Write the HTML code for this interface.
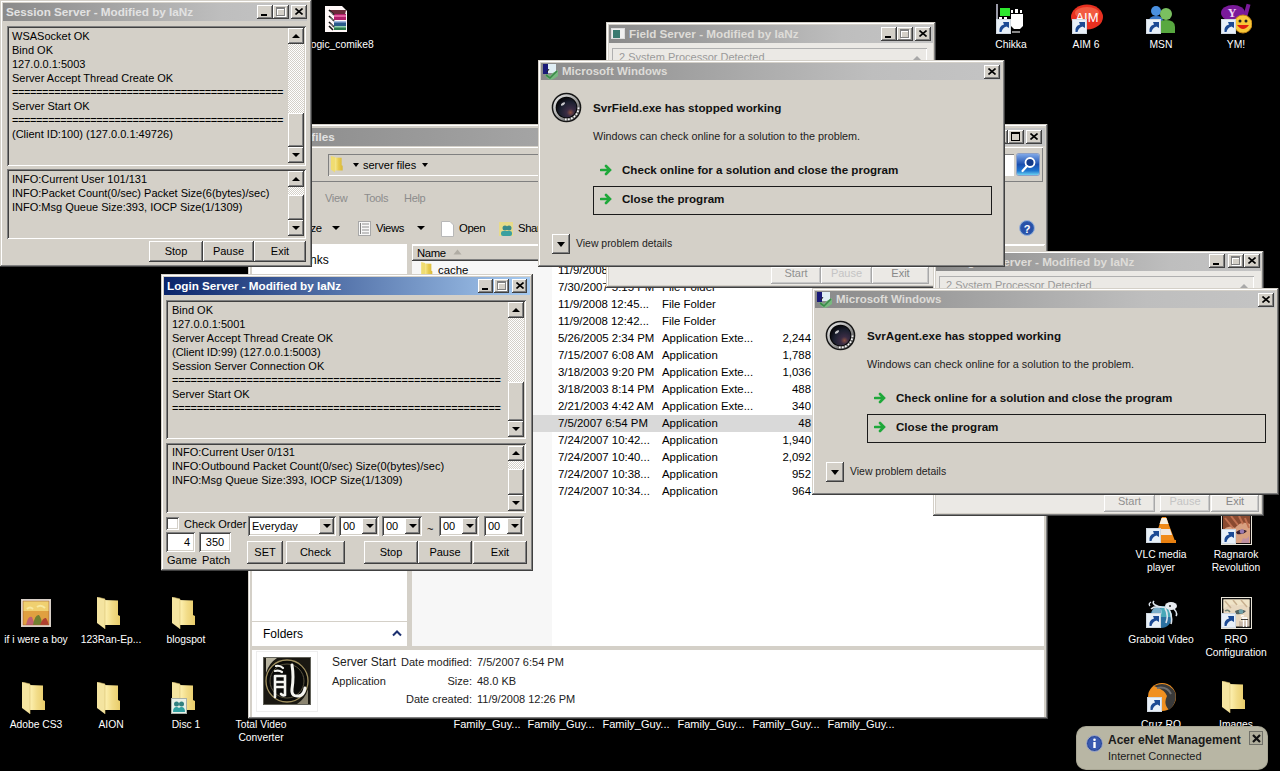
<!DOCTYPE html>
<html><head><meta charset="utf-8">
<style>
*{margin:0;padding:0;box-sizing:border-box}
html,body{width:1280px;height:771px;overflow:hidden;background:#000;font-family:"Liberation Sans",sans-serif;font-size:11px;color:#000}
.a{position:absolute}
.win{position:absolute;background:#d4d0c8;box-shadow:inset -1px -1px #404040,inset 1px 1px #d4d0c8,inset -2px -2px #808080,inset 2px 2px #fff}
.tb{position:absolute;height:18px;color:#d4d0c8;font-weight:bold;font-size:11.7px;line-height:18px;padding-left:3px;white-space:nowrap;overflow:hidden}
.tb.in{background:linear-gradient(90deg,#8a8a8a 0%,#bebebe 72%,#c4c4c4 100%);color:#e2e2e2}
.tb.ac{background:linear-gradient(90deg,#0a246a,#a6caf0);color:#fff}
.tbtn{position:absolute;width:16px;height:14px;background:#d4d0c8;box-shadow:inset -1px -1px #404040,inset 1px 1px #fff,inset -2px -2px #808080}
.btn{position:absolute;background:#d4d0c8;box-shadow:inset -1px -1px #404040,inset 1px 1px #fff,inset -2px -2px #808080;text-align:center;font-size:11px}
.sunk{position:absolute;background:#d4d0c8;box-shadow:inset 1px 1px #808080,inset -1px -1px #fff,inset 2px 2px #404040,inset -2px -2px #d4d0c8}
.sunkw{position:absolute;background:#fff;box-shadow:inset 1px 1px #808080,inset -1px -1px #fff,inset 2px 2px #404040,inset -2px -2px #d4d0c8}
.trk{position:absolute;background:repeating-conic-gradient(#fff 0 25%,#d4d0c8 0 50%) 0 0/2px 2px}
.arr{position:absolute;width:0;height:0;border-left:4px solid transparent;border-right:4px solid transparent}
.up{border-bottom:4px solid #000}
.dn{border-top:4px solid #000}
.log{position:absolute;line-height:14px;white-space:pre;font-size:11px}
.icolbl{position:absolute;color:#fff;font-size:10.3px;text-align:center;line-height:13px;text-shadow:0 0 2px #000}
.gh{position:absolute;background:#ebe9e5}
.ghbtn{position:absolute;background:#ebe9e5;box-shadow:inset -1px -1px #a8a8a8,inset 1px 1px #fff,inset -2px -2px #c8c8c8;text-align:center;font-size:11px;color:#8a8a8a}
.dlg{position:absolute;background:#d4d0c8;box-shadow:inset -1px -1px #404040,inset 1px 1px #d4d0c8,inset -2px -2px #808080,inset 2px 2px #fff;width:467px;height:207px}
.dlg .t1{position:absolute;left:55px;top:40px;font-weight:bold;font-size:11.65px;line-height:15px;color:#111}
.dlg .t2{position:absolute;left:55px;top:69px;font-size:10.8px;line-height:14px;color:#222}
.dlg .o1{position:absolute;left:84px;top:102px;font-weight:bold;font-size:11.6px;line-height:15px;color:#111}
.dlg .box{position:absolute;left:55px;top:126px;width:399px;height:29px;border:1px solid #1a1a1a}
.dlg .o2{position:absolute;left:84px;top:131px;font-weight:bold;font-size:11.6px;line-height:15px;color:#111}
.dlg .vp{position:absolute;left:38px;top:177px;font-size:10.45px;line-height:14px;color:#222}
</style></head><body>
<svg width="0" height="0" style="position:absolute"><defs><linearGradient id="fg" x1="0" x2="1"><stop offset="0" stop-color="#fff4b8"/><stop offset=".5" stop-color="#f2dc88"/><stop offset="1" stop-color="#e8cc6a"/></linearGradient><linearGradient id="fg2" x1="0" x2="1"><stop offset="0" stop-color="#f8ec98"/><stop offset=".5" stop-color="#e8cc50"/><stop offset="1" stop-color="#d8b838"/></linearGradient></defs></svg>
<svg class="a" style="left:996px;top:4px" width="30" height="30"><rect x="0" y="0" width="2" height="28" fill="#9a9aa8"/><rect x="4" y="4" width="10" height="8" fill="#2ee82e"/><rect x="3" y="13" width="3" height="3" fill="#fff"/><rect x="8" y="13" width="3" height="3" fill="#fff"/><rect x="15" y="6" width="2" height="3" fill="#fff"/><rect x="19" y="5" width="3" height="4" fill="#fff"/><rect x="24" y="6" width="2" height="3" fill="#fff"/><path d="M15 10H27V22L24 25H18L15 22Z" fill="#fff"/><rect x="16" y="27" width="8" height="2" fill="#888"/></svg>
<svg class="a" style="left:996px;top:19px" width="15" height="15"><rect x=".5" y=".5" width="14" height="14" fill="#e8f0f8" stroke="#d0d8e0"/><path d="M3.5 13Q2.5 7 8 5.5L7 3H13V9L10.5 7.5Q6.5 8.5 5.5 13Z" fill="#1c4a94"/></svg>
<div class="icolbl" style="left:966px;top:38px;width:90px">Chikka</div>
<svg class="a" style="left:1071px;top:4px" width="32" height="26"><ellipse cx="16" cy="13" rx="16" ry="12.5" fill="#e83020"/><ellipse cx="16" cy="9" rx="12" ry="6" fill="#f87858" opacity=".6"/><text x="16" y="18" text-anchor="middle" font-family="Liberation Sans" font-size="13" fill="#fff">AIM</text></svg>
<svg class="a" style="left:1072px;top:19px" width="15" height="15"><rect x=".5" y=".5" width="14" height="14" fill="#e8f0f8" stroke="#d0d8e0"/><path d="M3.5 13Q2.5 7 8 5.5L7 3H13V9L10.5 7.5Q6.5 8.5 5.5 13Z" fill="#1c4a94"/></svg>
<div class="icolbl" style="left:1041px;top:38px;width:90px">AIM 6</div>
<svg class="a" style="left:1146px;top:5px" width="30" height="29"><circle cx="10" cy="6" r="5" fill="#4a90e0"/><path d="M3 16Q3 11 10 11Q17 11 17 16V20H3Z" fill="#3a78c8"/><circle cx="20" cy="9" r="6" fill="#7ac060"/><path d="M11 22Q11 15 20 15Q29 15 29 22V28H11Z" fill="#58a840"/></svg>
<svg class="a" style="left:1146px;top:19px" width="15" height="15"><rect x=".5" y=".5" width="14" height="14" fill="#e8f0f8" stroke="#d0d8e0"/><path d="M3.5 13Q2.5 7 8 5.5L7 3H13V9L10.5 7.5Q6.5 8.5 5.5 13Z" fill="#1c4a94"/></svg>
<div class="icolbl" style="left:1116px;top:38px;width:90px">MSN</div>
<svg class="a" style="left:1220px;top:3px" width="32" height="31"><ellipse cx="13" cy="10" rx="12" ry="8" fill="#7a1a9a"/><rect x="25" y="1" width="4" height="12" fill="#7a1a9a" transform="rotate(15 27 7)"/><text x="12" y="14" text-anchor="middle" font-family="Liberation Serif" font-weight="bold" font-size="12" fill="#f0d8f8">Y</text><circle cx="23" cy="21" r="9" fill="#f8c838" stroke="#c88818"/><circle cx="20" cy="18" r="1.5" fill="#222"/><circle cx="26" cy="18" r="1.5" fill="#222"/><path d="M17 22Q23 30 29 22Z" fill="#e02010"/></svg>
<svg class="a" style="left:1221px;top:19px" width="15" height="15"><rect x=".5" y=".5" width="14" height="14" fill="#e8f0f8" stroke="#d0d8e0"/><path d="M3.5 13Q2.5 7 8 5.5L7 3H13V9L10.5 7.5Q6.5 8.5 5.5 13Z" fill="#1c4a94"/></svg>
<div class="icolbl" style="left:1191px;top:38px;width:90px">YM!</div>
<svg class="a" style="left:325px;top:6px" width="24" height="27"><path d="M0 0H17L22 5V26H0Z" fill="#fff8f8"/><path d="M4 4H21L20 9H9Z" fill="#6a2a3a"/><rect x="9" y="8" width="12" height="6" fill="#b0206a"/><rect x="9" y="9" width="12" height="2" fill="#e060a0"/><rect x="9" y="15" width="12" height="5" fill="#2a5a8a"/><rect x="9" y="15" width="12" height="1.5" fill="#a0b8e0"/><rect x="9" y="20" width="12" height="4" fill="#2a7a4a"/><rect x="9" y="20" width="12" height="1.5" fill="#90d0b0"/><path d="M4 4L9 9M4 10L9 15M4 16L9 21M4 20L8 24" stroke="#111" stroke-width="1.6"/><path d="M5 5.5L8 8.5M5 11.5L8 14.5M5 17.5L8 20.5" stroke="#f0f0f0" stroke-width=".8"/></svg>
<div class="icolbl" style="left:296px;top:38px;width:90px">logic_comike8</div>
<svg class="a" style="left:1150px;top:516px" width="28" height="28"><path d="M12 1H16L25 25H4Z" fill="#f08a18"/><path d="M11.5 2H16.5L18.5 8H9.5Z" fill="#f8f0e0"/><path d="M8 13H20L22 19H6Z" fill="#f0e8e0"/><path d="M2 24H26V27H2Z" fill="#e88010"/></svg>
<svg class="a" style="left:1146px;top:528px" width="15" height="15"><rect x=".5" y=".5" width="14" height="14" fill="#e8f0f8" stroke="#d0d8e0"/><path d="M3.5 13Q2.5 7 8 5.5L7 3H13V9L10.5 7.5Q6.5 8.5 5.5 13Z" fill="#1c4a94"/></svg>
<div class="icolbl" style="left:1116px;top:548px;width:90px">VLC media<br>player</div>
<svg class="a" style="left:1221px;top:516px" width="32" height="29"><rect x=".5" y="-1" width="30" height="29.5" fill="#1a1010" stroke="#e8e4d8"/><rect x="2" y="0" width="27" height="27" fill="#d8a080"/><path d="M2 0H29V8Q20 4 14 12Q8 8 2 14Z" fill="#8a4a30"/><path d="M4 2L12 12M10 0L17 9M18 0L22 8M24 2L28 12" stroke="#c07050" stroke-width="2"/><path d="M15 16Q20 12 26 15Q22 19 16 18Z" fill="#3a2030"/><circle cx="21" cy="15.5" r="2.2" fill="#9a7ab0"/><path d="M22 22Q26 24 28 20V27H20Z" fill="#c090a0"/></svg>
<svg class="a" style="left:1221px;top:529px" width="15" height="15"><rect x=".5" y=".5" width="14" height="14" fill="#e8f0f8" stroke="#d0d8e0"/><path d="M3.5 13Q2.5 7 8 5.5L7 3H13V9L10.5 7.5Q6.5 8.5 5.5 13Z" fill="#1c4a94"/></svg>
<div class="icolbl" style="left:1191px;top:548px;width:90px">Ragnarok<br>Revolution</div>
<svg class="a" style="left:1145px;top:597px" width="34" height="33"><circle cx="16" cy="20" r="11" fill="#2a70a0"/><path d="M16 9A11 11 0 0 1 27 20L16 20Z" fill="#48a8b8"/><circle cx="12" cy="15" r="5" fill="#c8e8f0" opacity=".5"/><path d="M6 12Q9 9 16 10" stroke="#e0e8f0" stroke-width="1.6" fill="none"/><ellipse cx="26" cy="9" rx="6" ry="4" fill="#e8ecf0"/><circle cx="25" cy="9" r="1" fill="#222"/><path d="M21 10Q14 11 10 8Q7 6 9 4M20 11Q24 18 21 26M29 12Q33 16 31 19M24 12Q28 20 26 27" stroke="#dce4ec" stroke-width="1.6" fill="none"/><path d="M5 9Q3 7 6 5" stroke="#dce4ec" stroke-width="1.4" fill="none"/></svg>
<svg class="a" style="left:1146px;top:613px" width="15" height="15"><rect x=".5" y=".5" width="14" height="14" fill="#e8f0f8" stroke="#d0d8e0"/><path d="M3.5 13Q2.5 7 8 5.5L7 3H13V9L10.5 7.5Q6.5 8.5 5.5 13Z" fill="#1c4a94"/></svg>
<div class="icolbl" style="left:1116px;top:633px;width:90px">Graboid Video</div>
<svg class="a" style="left:1221px;top:597px" width="32" height="33"><rect x=".5" y=".5" width="30" height="31" fill="#101010" stroke="#e8e4d8"/><rect x="2.5" y="2.5" width="26" height="27" fill="#e8d8c0"/><path d="M2.5 2.5H28.5V10Q22 6 16 9Q10 5 2.5 12Z" fill="#f0e4c8"/><path d="M4 4L10 11M12 3L16 8M20 3L26 10" stroke="#c8b090" stroke-width="1.5"/><path d="M14 14Q19 11 25 14Q21 18 15 17Z" fill="#506060"/><circle cx="20" cy="14.5" r="2.3" fill="#70a0a8"/><path d="M4 14Q7 12 9 15" stroke="#708070" stroke-width="1.5" fill="none"/><path d="M18 24Q24 26 28 22V29H18Z" fill="#c8b8a8"/><path d="M21 21H26M22.5 21V30M25.5 21V30M20 19.5Q21 18 23 19" stroke="#fff" stroke-width="1.3" fill="none"/><path d="M20 22.5H27" stroke="#111" stroke-width=".8"/></svg>
<svg class="a" style="left:1221px;top:613px" width="15" height="15"><rect x=".5" y=".5" width="14" height="14" fill="#e8f0f8" stroke="#d0d8e0"/><path d="M3.5 13Q2.5 7 8 5.5L7 3H13V9L10.5 7.5Q6.5 8.5 5.5 13Z" fill="#1c4a94"/></svg>
<div class="icolbl" style="left:1191px;top:633px;width:90px">RRO<br>Configuration</div>
<svg class="a" style="left:1147px;top:682px" width="31" height="31"><circle cx="15" cy="15" r="14" fill="#f09020"/><path d="M7 4Q20 -2 28 10Q31 20 22 28Q16 22 20 14Q18 8 7 4Z" fill="#3a3a3a"/><path d="M10 6Q20 4 24 12" stroke="#707070" stroke-width="2" fill="none"/></svg>
<svg class="a" style="left:1147px;top:697px" width="15" height="15"><rect x=".5" y=".5" width="14" height="14" fill="#e8f0f8" stroke="#d0d8e0"/><path d="M3.5 13Q2.5 7 8 5.5L7 3H13V9L10.5 7.5Q6.5 8.5 5.5 13Z" fill="#1c4a94"/></svg>
<div class="icolbl" style="left:1116px;top:718px;width:90px">Cruz RO</div>
<svg class="a" style="left:1222px;top:681px" width="24" height="33"><path d="M7 3L21 3.5V18L23 19V28L7 28Z" fill="url(#fg)"/><path d="M0 0L8 2V32L0 26Z" fill="#f4e4a0"/><path d="M0 0L8 2V32" fill="none" stroke="#d8c070" stroke-width=".6"/></svg>
<div class="icolbl" style="left:1191px;top:718px;width:90px">Images</div>
<svg class="a" style="left:21px;top:599px" width="30" height="28"><rect x=".5" y=".5" width="29" height="27" fill="#f0e8e0" stroke="#d8d0c8"/><rect x="2" y="2" width="26" height="24" fill="#e0a040"/><rect x="2" y="2" width="26" height="10" fill="#f0d070"/><path d="M6 10Q9 7 12 10M16 8Q20 5 24 9" stroke="#f8e8a0" stroke-width="2" fill="none"/><path d="M5 26Q7 16 11 18Q13 24 15 26Z" fill="#c06070"/><path d="M12 26Q14 15 18 16Q21 20 21 26Z" fill="#708030"/><path d="M19 26Q22 18 25 19Q27 22 28 26Z" fill="#b04030"/><rect x="2" y="2" width="26" height="24" fill="none" stroke="#a06030" stroke-width=".6"/></svg>
<div class="icolbl" style="left:-9px;top:633px;width:90px">if i were a boy</div>
<svg class="a" style="left:97px;top:597px" width="24" height="33"><path d="M7 3L21 3.5V18L23 19V28L7 28Z" fill="url(#fg)"/><path d="M0 0L8 2V32L0 26Z" fill="#f4e4a0"/><path d="M0 0L8 2V32" fill="none" stroke="#d8c070" stroke-width=".6"/></svg>
<div class="icolbl" style="left:66px;top:633px;width:90px">123Ran-Ep...</div>
<svg class="a" style="left:172px;top:597px" width="24" height="33"><path d="M7 3L21 3.5V18L23 19V28L7 28Z" fill="url(#fg)"/><path d="M0 0L8 2V32L0 26Z" fill="#f4e4a0"/><path d="M0 0L8 2V32" fill="none" stroke="#d8c070" stroke-width=".6"/></svg>
<div class="icolbl" style="left:141px;top:633px;width:90px">blogspot</div>
<svg class="a" style="left:22px;top:682px" width="24" height="33"><path d="M7 3L21 3.5V18L23 19V28L7 28Z" fill="url(#fg)"/><path d="M0 0L8 2V32L0 26Z" fill="#f4e4a0"/><path d="M0 0L8 2V32" fill="none" stroke="#d8c070" stroke-width=".6"/></svg>
<div class="icolbl" style="left:-9px;top:718px;width:90px">Adobe CS3</div>
<svg class="a" style="left:97px;top:682px" width="24" height="33"><path d="M7 3L21 3.5V18L23 19V28L7 28Z" fill="url(#fg)"/><path d="M0 0L8 2V32L0 26Z" fill="#f4e4a0"/><path d="M0 0L8 2V32" fill="none" stroke="#d8c070" stroke-width=".6"/></svg>
<div class="icolbl" style="left:66px;top:718px;width:90px">AION</div>
<svg class="a" style="left:172px;top:682px" width="24" height="33"><path d="M7 3L21 3.5V18L23 19V28L7 28Z" fill="url(#fg)"/><path d="M0 0L8 2V32L0 26Z" fill="#f4e4a0"/><path d="M0 0L8 2V32" fill="none" stroke="#d8c070" stroke-width=".6"/></svg>
<svg class="a" style="left:171px;top:698px" width="16" height="16"><rect x=".5" y=".5" width="15" height="15" fill="#e8f0e8" stroke="#a8b0a8"/><circle cx="5.5" cy="6" r="2.5" fill="#308080"/><circle cx="10.5" cy="6" r="2.5" fill="#308080"/><path d="M2 14Q2 9 5.5 9Q9 9 9 14ZM7 14Q7 9 10.5 9Q14 9 14 14Z" fill="#30a0a0"/></svg>
<div class="icolbl" style="left:141px;top:718px;width:90px">Disc 1</div>
<div class="icolbl" style="left:216px;top:718px;width:90px">Total Video<br>Converter</div>
<div class="icolbl" style="left:447px;top:718px;width:80px;font-size:11px">Family_Guy...</div>
<div class="icolbl" style="left:521px;top:718px;width:80px;font-size:11px">Family_Guy...</div>
<div class="icolbl" style="left:596px;top:718px;width:80px;font-size:11px">Family_Guy...</div>
<div class="icolbl" style="left:671px;top:718px;width:80px;font-size:11px">Family_Guy...</div>
<div class="icolbl" style="left:746px;top:718px;width:80px;font-size:11px">Family_Guy...</div>
<div class="icolbl" style="left:821px;top:718px;width:80px;font-size:11px">Family_Guy...</div>

<!-- ============ EXPLORER ============ -->
<div class="win" style="left:248px;top:124px;width:800px;height:595px">
  <div class="tb in" style="left:3px;top:4px;width:794px"><span class="a" style="left:22px;top:0">server files</span></div>
  <div class="tbtn" style="left:744px;top:6px;width:16px;height:14px"><div class="a" style="left:4px;top:9px;width:6px;height:2px;background:#000"></div></div>
  <div class="tbtn" style="left:760px;top:6px;width:16px;height:14px"><div class="a" style="left:3px;top:2px;width:9px;height:9px;border:1px solid #000;border-top-width:2px"></div></div>
  <div class="tbtn" style="left:778px;top:6px;width:16px;height:14px"><svg class="a" style="left:4px;top:3px" width="8" height="7"><path d="M0.5 0.5L7.5 6.5M7.5 0.5L0.5 6.5" stroke="#000" stroke-width="1.6"/></svg></div>
  <!-- address panel -->
  <div class="a" style="left:3px;top:23px;width:792px;height:35px;box-shadow:inset 1px 1px #fff,inset -1px -1px #808080"></div>
  <div class="a" style="left:80px;top:30px;width:500px;height:22px;box-shadow:inset 1px 1px #808080,inset -1px -1px #fff"></div>
  <svg class="a" style="left:82px;top:32px" width="14" height="17" viewBox="0 0 24 33"><path d="M7 3L21 3.5V18L23 19V28L7 28Z" fill="url(#fg2)"/><path d="M0 0L8 2V32L0 26Z" fill="#f0dc70"/></svg>
  <div class="arr dn a" style="left:105px;top:39px;border-left-width:3px;border-right-width:3px;border-top-width:4px"></div>
  <div class="a" style="left:115px;top:34px;line-height:14px">server files</div>
  <div class="arr dn a" style="left:174px;top:39px;border-left-width:3px;border-right-width:3px;border-top-width:4px"></div>
  <div class="a" style="left:585px;top:30px;width:181px;height:22px;background:#fff;box-shadow:inset 1px 1px #808080,inset -1px -1px #fff"></div>
  <div class="a" style="left:769px;top:30px;width:22px;height:21px;border-radius:2px;background:linear-gradient(180deg,#7fa8e8,#1a4fb0 50%,#1e76d0 80%,#6cd0f0);box-shadow:0 0 0 1px #8ca0c8"><svg class="a" style="left:3px;top:2px" width="16" height="17"><circle cx="10" cy="6.5" r="4.5" fill="#123a8a" stroke="#fff" stroke-width="1.8"/><path d="M7 10L2.5 15" stroke="#fff" stroke-width="2.2" stroke-linecap="round"/></svg></div>
  <!-- menu -->
  <div class="a" style="left:77px;top:67px;color:#8c8c8c;line-height:14px;font-size:11px;letter-spacing:-0.3px">View</div>
  <div class="a" style="left:116px;top:67px;color:#8c8c8c;line-height:14px;font-size:11px;letter-spacing:-0.3px">Tools</div>
  <div class="a" style="left:156px;top:67px;color:#8c8c8c;line-height:14px;font-size:11px;letter-spacing:-0.3px">Help</div>
  <!-- toolbar -->
  <div class="a" style="left:31px;top:97px;line-height:14px;font-size:11.3px;letter-spacing:-0.4px">Organize</div>
  <div class="arr dn a" style="left:84px;top:102px"></div>
  <svg class="a" style="left:110px;top:97px" width="13" height="15"><rect x="0.5" y="0.5" width="12" height="14" fill="#f8f8f8" stroke="#a8a8a8"/><path d="M4 3H11M4 6H11M4 9H11M4 12H11" stroke="#909090"/><path d="M2.5 2V13" stroke="#808080"/></svg>
  <div class="a" style="left:128px;top:97px;line-height:14px;font-size:11.3px;letter-spacing:-0.4px">Views</div>
  <div class="arr dn a" style="left:169px;top:102px"></div>
  <svg class="a" style="left:193px;top:97px" width="13" height="16"><path d="M0.5 0.5H9L12.5 4V15.5H0.5Z" fill="#fff" stroke="#b8b8b8"/></svg>
  <div class="a" style="left:211px;top:97px;line-height:14px;font-size:11.3px;letter-spacing:-0.4px">Open</div>
  <svg class="a" style="left:251px;top:97px" width="15" height="16"><rect x="0" y="1" width="14" height="14" fill="#f0e070" opacity=".7"/><circle cx="6" cy="7" r="2.5" fill="#3a8a8a"/><circle cx="10" cy="7" r="2.5" fill="#3a8a8a"/><rect x="2" y="10" width="11" height="5" rx="2" fill="#3aa0a0"/></svg>
  <div class="a" style="left:270px;top:97px;line-height:14px;font-size:11.3px;letter-spacing:-0.4px">Share</div>
  <svg class="a" style="left:771px;top:96px" width="16" height="16"><circle cx="8" cy="8" r="7.5" fill="#3060b0" stroke="#9ab0d8"/><circle cx="8" cy="8" r="6" fill="#2850a8"/><text x="8" y="12.5" text-anchor="middle" font-family="Liberation Sans" font-weight="bold" font-size="11" fill="#fff">?</text></svg>
  <div class="a" style="left:3px;top:120px;width:794px;height:1px;background:#fff"></div>
  <!-- nav pane -->
  <div class="a" style="left:4px;top:120px;width:155px;height:378px;background:#fff"></div>
  <div class="a" style="left:6px;top:129px;line-height:14px;font-size:12px">Favorite Links</div>
  <div class="a" style="left:4px;top:497px;width:155px;height:1px;background:#d4d0c8"></div>
  <div class="a" style="left:4px;top:498px;width:155px;height:24px;background:#fff"></div>
  <div class="a" style="left:15px;top:503px;line-height:14px;font-size:12px">Folders</div>
  <svg class="a" style="left:144px;top:506px" width="10" height="7"><path d="M1 5.5L5 1.5L9 5.5" fill="none" stroke="#1c3070" stroke-width="2"/></svg>
  <!-- list -->
  <div class="a" style="left:164px;top:120px;width:632px;height:402px;background:#fff"></div>
  <div class="a" style="left:164px;top:137px;width:140px;height:385px;background:#f7f7f7"></div>
  <div class="a" style="left:164px;top:121px;width:632px;height:16px;background:#d4d0c8;box-shadow:inset 0 -1px #404040,inset 1px 1px #fff,inset 0 -2px #808080"></div>
  <div class="a" style="left:169px;top:122px;line-height:14px;font-size:11.3px;letter-spacing:-0.4px">Name</div>
  <svg class="a" style="left:205px;top:125px" width="9" height="6"><path d="M0.5 5.5L4.5 0.5L8.5 5.5Z" fill="#b0aca4"/></svg>
  <div class="a" style="left:310px;top:122px;line-height:14px;font-size:12px">Date modified</div>
  <div class="a" style="left:414px;top:122px;line-height:14px;font-size:12px">Type</div>
  <div class="a" style="left:530px;top:122px;line-height:14px;font-size:12px">Size</div>
  <div class="a" style="left:164px;top:291px;width:632px;height:17px;background:#d9d9d9"></div>
  <div class="a" style="left:164px;top:138px;width:632px">
<svg class="a" style="left:9px;top:0px" width="12" height="16" viewBox="0 0 24 33"><path d="M7 3L21 3.5V18L23 19V28L7 28Z" fill="url(#fg2)"/><path d="M0 0L8 2V32L0 26Z" fill="#f0dc70"/></svg>
<div class="a" style="left:26px;top:0px;line-height:17px;font-size:11.4px">cache</div>
<div class="a" style="left:146px;top:0px;line-height:17px;font-size:11.4px">11/9/2008 12:50...</div>
<div class="a" style="left:250px;top:0px;line-height:17px;font-size:11.4px">File Folder</div>
<div class="a" style="left:359px;top:0px;width:40px;text-align:right;line-height:17px;font-size:11.4px"></div>
<svg class="a" style="left:9px;top:17px" width="12" height="16" viewBox="0 0 24 33"><path d="M7 3L21 3.5V18L23 19V28L7 28Z" fill="url(#fg2)"/><path d="M0 0L8 2V32L0 26Z" fill="#f0dc70"/></svg>
<div class="a" style="left:26px;top:17px;line-height:17px;font-size:11.4px">images</div>
<div class="a" style="left:146px;top:17px;line-height:17px;font-size:11.4px">7/30/2007 5:15 PM</div>
<div class="a" style="left:250px;top:17px;line-height:17px;font-size:11.4px">File Folder</div>
<div class="a" style="left:359px;top:17px;width:40px;text-align:right;line-height:17px;font-size:11.4px"></div>
<svg class="a" style="left:9px;top:34px" width="12" height="16" viewBox="0 0 24 33"><path d="M7 3L21 3.5V18L23 19V28L7 28Z" fill="url(#fg2)"/><path d="M0 0L8 2V32L0 26Z" fill="#f0dc70"/></svg>
<div class="a" style="left:26px;top:34px;line-height:17px;font-size:11.4px">log</div>
<div class="a" style="left:146px;top:34px;line-height:17px;font-size:11.4px">11/9/2008 12:45...</div>
<div class="a" style="left:250px;top:34px;line-height:17px;font-size:11.4px">File Folder</div>
<div class="a" style="left:359px;top:34px;width:40px;text-align:right;line-height:17px;font-size:11.4px"></div>
<svg class="a" style="left:9px;top:51px" width="12" height="16" viewBox="0 0 24 33"><path d="M7 3L21 3.5V18L23 19V28L7 28Z" fill="url(#fg2)"/><path d="M0 0L8 2V32L0 26Z" fill="#f0dc70"/></svg>
<div class="a" style="left:26px;top:51px;line-height:17px;font-size:11.4px">mapdata</div>
<div class="a" style="left:146px;top:51px;line-height:17px;font-size:11.4px">11/9/2008 12:42...</div>
<div class="a" style="left:250px;top:51px;line-height:17px;font-size:11.4px">File Folder</div>
<div class="a" style="left:359px;top:51px;width:40px;text-align:right;line-height:17px;font-size:11.4px"></div>
<div class="a" style="left:26px;top:68px;line-height:17px;font-size:11.4px">dbghelp.dll</div>
<div class="a" style="left:146px;top:68px;line-height:17px;font-size:11.4px">5/26/2005 2:34 PM</div>
<div class="a" style="left:250px;top:68px;line-height:17px;font-size:11.4px">Application Exte...</div>
<div class="a" style="left:359px;top:68px;width:40px;text-align:right;line-height:17px;font-size:11.4px">2,244</div>
<div class="a" style="left:26px;top:85px;line-height:17px;font-size:11.4px">GameServer.exe</div>
<div class="a" style="left:146px;top:85px;line-height:17px;font-size:11.4px">7/15/2007 6:08 AM</div>
<div class="a" style="left:250px;top:85px;line-height:17px;font-size:11.4px">Application</div>
<div class="a" style="left:359px;top:85px;width:40px;text-align:right;line-height:17px;font-size:11.4px">1,788</div>
<div class="a" style="left:26px;top:102px;line-height:17px;font-size:11.4px">msvcp71.dll</div>
<div class="a" style="left:146px;top:102px;line-height:17px;font-size:11.4px">3/18/2003 9:20 PM</div>
<div class="a" style="left:250px;top:102px;line-height:17px;font-size:11.4px">Application Exte...</div>
<div class="a" style="left:359px;top:102px;width:40px;text-align:right;line-height:17px;font-size:11.4px">1,036</div>
<div class="a" style="left:26px;top:119px;line-height:17px;font-size:11.4px">msvcr71.dll</div>
<div class="a" style="left:146px;top:119px;line-height:17px;font-size:11.4px">3/18/2003 8:14 PM</div>
<div class="a" style="left:250px;top:119px;line-height:17px;font-size:11.4px">Application Exte...</div>
<div class="a" style="left:359px;top:119px;width:40px;text-align:right;line-height:17px;font-size:11.4px">488</div>
<div class="a" style="left:26px;top:136px;line-height:17px;font-size:11.4px">mfc71.dll</div>
<div class="a" style="left:146px;top:136px;line-height:17px;font-size:11.4px">2/21/2003 4:42 AM</div>
<div class="a" style="left:250px;top:136px;line-height:17px;font-size:11.4px">Application Exte...</div>
<div class="a" style="left:359px;top:136px;width:40px;text-align:right;line-height:17px;font-size:11.4px">340</div>
<div class="a" style="left:26px;top:153px;line-height:17px;font-size:11.4px">Server Start</div>
<div class="a" style="left:146px;top:153px;line-height:17px;font-size:11.4px">7/5/2007 6:54 PM</div>
<div class="a" style="left:250px;top:153px;line-height:17px;font-size:11.4px">Application</div>
<div class="a" style="left:359px;top:153px;width:40px;text-align:right;line-height:17px;font-size:11.4px">48</div>
<div class="a" style="left:26px;top:170px;line-height:17px;font-size:11.4px">SvrAgent.exe</div>
<div class="a" style="left:146px;top:170px;line-height:17px;font-size:11.4px">7/24/2007 10:42...</div>
<div class="a" style="left:250px;top:170px;line-height:17px;font-size:11.4px">Application</div>
<div class="a" style="left:359px;top:170px;width:40px;text-align:right;line-height:17px;font-size:11.4px">1,940</div>
<div class="a" style="left:26px;top:187px;line-height:17px;font-size:11.4px">SvrField.exe</div>
<div class="a" style="left:146px;top:187px;line-height:17px;font-size:11.4px">7/24/2007 10:40...</div>
<div class="a" style="left:250px;top:187px;line-height:17px;font-size:11.4px">Application</div>
<div class="a" style="left:359px;top:187px;width:40px;text-align:right;line-height:17px;font-size:11.4px">2,092</div>
<div class="a" style="left:26px;top:204px;line-height:17px;font-size:11.4px">SvrLogin.exe</div>
<div class="a" style="left:146px;top:204px;line-height:17px;font-size:11.4px">7/24/2007 10:38...</div>
<div class="a" style="left:250px;top:204px;line-height:17px;font-size:11.4px">Application</div>
<div class="a" style="left:359px;top:204px;width:40px;text-align:right;line-height:17px;font-size:11.4px">952</div>
<div class="a" style="left:26px;top:221px;line-height:17px;font-size:11.4px">SvrSession.exe</div>
<div class="a" style="left:146px;top:221px;line-height:17px;font-size:11.4px">7/24/2007 10:34...</div>
<div class="a" style="left:250px;top:221px;line-height:17px;font-size:11.4px">Application</div>
<div class="a" style="left:359px;top:221px;width:40px;text-align:right;line-height:17px;font-size:11.4px">964</div>
  </div>
  <!-- splitter / details -->
  <div class="a" style="left:159px;top:120px;width:5px;height:406px;background:#d4d0c8"></div>
  <div class="a" style="left:4px;top:522px;width:792px;height:4px;background:#d4d0c8"></div>
  <div class="a" style="left:4px;top:526px;width:792px;height:67px;background:#fff"></div>
  <div class="a" style="left:8px;top:527px;width:62px;height:61px;border:1px solid #eeeeee"></div>
  <svg class="a" style="left:15px;top:533px" width="48" height="48"><rect x=".5" y=".5" width="47" height="47" fill="#1a1812" stroke="#606058"/><path d="M1 1H14Q6 6 3 16V1Z" fill="#b8b4a0"/><path d="M47 47H34Q42 42 45 32V47Z" fill="#8a8470"/><circle cx="24" cy="24" r="21" fill="#0a0a08" stroke="#a09060" stroke-width="1.3"/><circle cx="24" cy="24" r="17" fill="none" stroke="#5a5440" stroke-width="1"/><path d="M13 9Q17 8 20 11M12 14Q16 13 19 15" stroke="#f4f4f0" stroke-width="2.2" fill="none" stroke-linecap="round"/><path d="M12 19V40M12 19H22V38Q20 39 18 37M14 25H20M14 30H20" stroke="#f4f4f0" stroke-width="2.6" fill="none" stroke-linecap="round"/><path d="M29 8Q31 20 29 32Q28 40 36 39Q41 38 42 31" stroke="#f4f4f0" stroke-width="3" fill="none" stroke-linecap="round"/></svg>
  <div class="a" style="left:84px;top:531px;line-height:15px;font-size:12px;color:#222">Server Start</div>
  <div class="a" style="left:84px;top:550px;line-height:14px;font-size:11px;color:#222">Application</div>
  <div class="a" style="left:124px;top:531px;width:100px;text-align:right;line-height:15px;font-size:11px;color:#222">Date modified:</div>
  <div class="a" style="left:124px;top:550px;width:100px;text-align:right;line-height:14px;font-size:11px;color:#222">Size:</div>
  <div class="a" style="left:124px;top:568px;width:100px;text-align:right;line-height:14px;font-size:11px;color:#222">Date created:</div>
  <div class="a" style="left:229px;top:531px;line-height:15px;font-size:11px;color:#222">7/5/2007 6:54 PM</div>
  <div class="a" style="left:229px;top:550px;line-height:14px;font-size:11px;color:#222">48.0 KB</div>
  <div class="a" style="left:229px;top:568px;line-height:14px;font-size:11px;color:#222">11/9/2008 12:26 PM</div>
</div>


<!-- ============ FIELD SERVER ============ -->
<div class="win" style="left:606px;top:22px;width:330px;height:266px">
  <div class="tb in" style="left:3px;top:3px;width:324px;padding-left:20px;color:#dedcd8">Field Server - Modified by IaNz</div>
  <div class="a" style="left:5px;top:6px;width:14px;height:11px;background:#f0f0f0;border:1px solid #ddd"><div class="a" style="left:1px;top:1px;width:7px;height:8px;background:#3a7a70"></div></div>
  <div class="tbtn" style="left:275px;top:5px;width:16px;height:14px"><div class="a" style="left:4px;top:9px;width:6px;height:2px;background:#000"></div></div><div class="tbtn" style="left:291px;top:5px;width:16px;height:14px"><div class="a" style="left:4px;top:3px;width:9px;height:9px;border:1px solid #fff;border-top-width:2px"></div><div class="a" style="left:3px;top:2px;width:9px;height:9px;border:1px solid #808080;border-top-width:2px"></div></div><div class="tbtn" style="left:309px;top:5px;width:16px;height:14px"><svg class="a" style="left:4px;top:3px" width="8" height="7"><path d="M0.5 0.5L7.5 6.5M7.5 0.5L0.5 6.5" stroke="#000" stroke-width="1.6"/></svg></div>
  <div class="gh" style="left:3px;top:21px;width:324px;height:242px"></div>
  <div class="a" style="left:6px;top:26px;width:315px;height:200px;box-shadow:inset 1px 1px #b0b0b0,inset -1px -1px #fff"></div>
  <div class="a" style="left:13px;top:28px;line-height:14px;color:#9a9a9a">2 System Processor Detected</div>
  <svg class="a" style="left:303px;top:30px" width="16" height="10"><path d="M4 8L8 4L12 8Z" fill="#a8a8a8"/></svg>
  <div class="ghbtn" style="left:165px;top:245px;width:50px;height:17px;line-height:13px;color:#909090">Start</div>
  <div class="ghbtn" style="left:215px;top:245px;width:51px;height:17px;line-height:13px;color:#c4c4c4">Pause</div>
  <div class="ghbtn" style="left:266px;top:245px;width:57px;height:17px;line-height:13px;color:#888">Exit</div>
</div>

<!-- ============ AGENT SERVER ============ -->
<div class="win" style="left:933px;top:251px;width:331px;height:265px">
  <div class="tb in" style="left:3px;top:2px;width:325px;padding-left:23px;color:#dedcd8">Agent Server - Modified by IaNz</div>
  <div class="tbtn" style="left:276px;top:3px;width:16px;height:14px"><div class="a" style="left:4px;top:9px;width:6px;height:2px;background:#000"></div></div><div class="tbtn" style="left:295px;top:3px;width:16px;height:14px"><div class="a" style="left:4px;top:3px;width:9px;height:9px;border:1px solid #fff;border-top-width:2px"></div><div class="a" style="left:3px;top:2px;width:9px;height:9px;border:1px solid #808080;border-top-width:2px"></div></div><div class="tbtn" style="left:311px;top:3px;width:16px;height:14px"><svg class="a" style="left:4px;top:3px" width="8" height="7"><path d="M0.5 0.5L7.5 6.5M7.5 0.5L0.5 6.5" stroke="#000" stroke-width="1.6"/></svg></div>
  <div class="gh" style="left:3px;top:20px;width:325px;height:242px"></div>
  <div class="a" style="left:6px;top:25px;width:315px;height:200px;box-shadow:inset 1px 1px #b0b0b0,inset -1px -1px #fff"></div>
  <div class="a" style="left:13px;top:27px;line-height:14px;color:#9a9a9a">2 System Processor Detected</div>
  <svg class="a" style="left:303px;top:29px" width="16" height="10"><path d="M4 8L8 4L12 8Z" fill="#a8a8a8"/></svg>
  <div class="ghbtn" style="left:171px;top:244px;width:51px;height:17px;line-height:13px;color:#909090">Start</div>
  <div class="ghbtn" style="left:227px;top:244px;width:50px;height:17px;line-height:13px;color:#c4c4c4">Pause</div>
  <div class="ghbtn" style="left:278px;top:244px;width:48px;height:17px;line-height:13px;color:#888">Exit</div>
</div>


<!-- ============ SESSION SERVER ============ -->
<div class="win" style="left:0;top:0;width:312px;height:267px">
  <div class="tb in" style="left:3px;top:3px;width:304px">Session Server - Modified by IaNz</div>
  <div class="tbtn" style="left:257px;top:5px;width:16px;height:14px"><div class="a" style="left:4px;top:9px;width:6px;height:2px;background:#000"></div></div><div class="tbtn" style="left:273px;top:5px;width:16px;height:14px"><div class="a" style="left:4px;top:3px;width:9px;height:9px;border:1px solid #fff;border-top-width:2px"></div><div class="a" style="left:3px;top:2px;width:9px;height:9px;border:1px solid #808080;border-top-width:2px"></div></div><div class="tbtn" style="left:291px;top:5px;width:16px;height:14px"><svg class="a" style="left:4px;top:3px" width="8" height="7"><path d="M0.5 0.5L7.5 6.5M7.5 0.5L0.5 6.5" stroke="#000" stroke-width="1.6"/></svg></div>
  <div class="sunk" style="left:7px;top:26px;width:299px;height:140px">
    <div class="log" style="left:5px;top:3px">WSASocket OK
Bind OK
127.0.0.1:5003
Server Accept Thread Create OK
<span style="letter-spacing:-0.4px">=============================================</span>
Server Start OK
<span style="letter-spacing:-0.4px">=============================================</span>
(Client ID:100) (127.0.0.1:49726)</div>
    <div class="btn" style="left:281px;top:2px;width:16px;height:16px"><div class="arr up" style="left:4px;top:6px"></div></div>
    <div class="trk" style="left:281px;top:18px;width:16px;height:69px"></div>
    <div class="btn" style="left:281px;top:87px;width:16px;height:34px"></div>
    <div class="btn" style="left:281px;top:121px;width:16px;height:16px"><div class="arr dn" style="left:4px;top:6px"></div></div>
  </div>
  <div class="sunk" style="left:7px;top:169px;width:299px;height:70px">
    <div class="log" style="left:5px;top:3px">INFO:Current User 101/131
INFO:Packet Count(0/sec) Packet Size(6(bytes)/sec)
INFO:Msg Queue Size:393, IOCP Size(1/1309)</div>
    <div class="btn" style="left:281px;top:2px;width:16px;height:16px"><div class="arr up" style="left:4px;top:6px"></div></div>
    <div class="trk" style="left:281px;top:18px;width:16px;height:8px"></div>
    <div class="btn" style="left:281px;top:26px;width:16px;height:25px"></div>
    <div class="btn" style="left:281px;top:51px;width:16px;height:16px"><div class="arr dn" style="left:4px;top:6px"></div></div>
  </div>
  <div class="btn" style="left:149px;top:241px;width:54px;height:21px;line-height:20px">Stop</div>
  <div class="btn" style="left:203px;top:241px;width:51px;height:21px;line-height:20px">Pause</div>
  <div class="btn" style="left:254px;top:241px;width:52px;height:21px;line-height:20px">Exit</div>
</div>


<!-- ============ LOGIN SERVER ============ -->
<div class="win" style="left:161px;top:274px;width:372px;height:297px">
  <div class="tb ac" style="left:3px;top:3px;width:366px">Login Server - Modified by IaNz</div>
  <div class="tbtn" style="left:317px;top:5px;width:15px;height:14px"><div class="a" style="left:4px;top:9px;width:6px;height:2px;background:#000"></div></div><div class="tbtn" style="left:333px;top:5px;width:15px;height:14px"><div class="a" style="left:4px;top:3px;width:9px;height:9px;border:1px solid #fff;border-top-width:2px"></div><div class="a" style="left:3px;top:2px;width:9px;height:9px;border:1px solid #808080;border-top-width:2px"></div></div><div class="tbtn" style="left:351px;top:5px;width:15px;height:14px"><svg class="a" style="left:4px;top:3px" width="8" height="7"><path d="M0.5 0.5L7.5 6.5M7.5 0.5L0.5 6.5" stroke="#000" stroke-width="1.6"/></svg></div>
  <div class="sunk" style="left:5px;top:26px;width:360px;height:139px">
    <div class="log" style="left:6px;top:3px">Bind OK
127.0.0.1:5001
Server Accept Thread Create OK
(Client ID:99) (127.0.0.1:5003)
Session Server Connection OK
<span style="letter-spacing:-0.22px">=====================================================</span>
Server Start OK
<span style="letter-spacing:-0.22px">=====================================================</span></div>
    <div class="btn" style="left:342px;top:2px;width:16px;height:16px"><div class="arr up" style="left:4px;top:6px"></div></div>
    <div class="trk" style="left:342px;top:18px;width:16px;height:64px"></div>
    <div class="btn" style="left:342px;top:82px;width:16px;height:39px"></div>
    <div class="btn" style="left:342px;top:121px;width:16px;height:16px"><div class="arr dn" style="left:4px;top:6px"></div></div>
  </div>
  <div class="sunk" style="left:5px;top:169px;width:360px;height:70px">
    <div class="log" style="left:6px;top:2px">INFO:Current User 0/131
INFO:Outbound Packet Count(0/sec) Size(0(bytes)/sec)
INFO:Msg Queue Size:393, IOCP Size(1/1309)</div>
    <div class="btn" style="left:342px;top:3px;width:16px;height:15px"><div class="arr up" style="left:4px;top:5px"></div></div>
    <div class="trk" style="left:342px;top:18px;width:16px;height:8px"></div>
    <div class="btn" style="left:342px;top:26px;width:16px;height:26px"></div>
    <div class="btn" style="left:342px;top:52px;width:16px;height:16px"><div class="arr dn" style="left:4px;top:6px"></div></div>
  </div>
  <div class="sunkw" style="left:5px;top:243px;width:13px;height:13px"></div>
  <div class="a" style="left:23px;top:243px;line-height:14px">Check Order</div>
  <div class="sunkw" style="left:5px;top:258px;width:29px;height:20px;text-align:right;padding-right:5px;line-height:20px">4</div>
  <div class="sunkw" style="left:38px;top:258px;width:32px;height:20px;text-align:center;line-height:20px">350</div>
  <div class="a" style="left:6px;top:279px;line-height:14px">Game</div>
  <div class="a" style="left:41px;top:279px;line-height:14px">Patch</div>
  <div class="sunkw" style="left:87px;top:242px;width:88px;height:20px;line-height:20px;padding-left:4px">Everyday<div class="btn" style="left:71px;top:2px;width:15px;height:16px"><div class="arr dn" style="left:4px;top:6px"></div></div></div>
  <div class="sunkw" style="left:178px;top:242px;width:40px;height:20px;line-height:20px;padding-left:4px">00<div class="btn" style="left:23px;top:2px;width:15px;height:16px"><div class="arr dn" style="left:4px;top:6px"></div></div></div>
  <div class="sunkw" style="left:221px;top:242px;width:40px;height:20px;line-height:20px;padding-left:4px">00<div class="btn" style="left:23px;top:2px;width:15px;height:16px"><div class="arr dn" style="left:4px;top:6px"></div></div></div>
  <div class="a" style="left:266px;top:248px;line-height:14px">~</div>
  <div class="sunkw" style="left:278px;top:242px;width:40px;height:20px;line-height:20px;padding-left:4px">00<div class="btn" style="left:23px;top:2px;width:15px;height:16px"><div class="arr dn" style="left:4px;top:6px"></div></div></div>
  <div class="sunkw" style="left:323px;top:242px;width:40px;height:20px;line-height:20px;padding-left:4px">00<div class="btn" style="left:23px;top:2px;width:15px;height:16px"><div class="arr dn" style="left:4px;top:6px"></div></div></div>
  <div class="btn" style="left:86px;top:267px;width:36px;height:23px;line-height:22px">SET</div>
  <div class="btn" style="left:125px;top:267px;width:59px;height:23px;line-height:22px">Check</div>
  <div class="btn" style="left:203px;top:267px;width:54px;height:23px;line-height:22px">Stop</div>
  <div class="btn" style="left:257px;top:267px;width:54px;height:23px;line-height:22px">Pause</div>
  <div class="btn" style="left:312px;top:267px;width:54px;height:23px;line-height:22px">Exit</div>
</div>


<!-- ============ DIALOGS ============ -->
<div class="dlg" style="left:538px;top:60px">
  <div class="tb in" style="left:3px;top:3px;width:460px;height:17px;line-height:17px;padding-left:21px;color:#dedcd8;font-size:11.5px">Microsoft Windows</div>
  <svg class="a" style="left:4px;top:3px" width="18" height="18"><rect x="1" y="1" width="5" height="10" fill="#1a1a78"/><rect x="6" y="1" width="8" height="9" fill="#e0eef4"/><path d="M5 9L7 6" stroke="#222" stroke-width="1"/><path d="M3 12Q6 10 8 13Q11 9 16 7V13Q12 16 9 17Q5 16 3 12Z" fill="#78b880"/><path d="M4 12L8 15L15 8" fill="none" stroke="#3a8a48" stroke-width="1.6"/></svg>
  <div class="tbtn" style="left:446px;top:5px;width:16px;height:14px"><svg class="a" style="left:4px;top:3px" width="8" height="7"><path d="M0.5 0.5L7.5 6.5M7.5 0.5L0.5 6.5" stroke="#000" stroke-width="1.6"/></svg></div>
  <svg class="a" style="left:12px;top:31px" width="32" height="32"><defs><linearGradient id="rg538" x1="0" y1="0" x2="1" y2="1"><stop offset="0" stop-color="#f0f0f0"/><stop offset=".5" stop-color="#a8a8a8"/><stop offset="1" stop-color="#404040"/></linearGradient><radialGradient id="lg538" cx="70%" cy="75%" r="75%"><stop offset="0" stop-color="#8a5040"/><stop offset=".25" stop-color="#3a2c44"/><stop offset=".7" stop-color="#1c2030"/><stop offset="1" stop-color="#0a0a10"/></radialGradient></defs><circle cx="16.5" cy="16.5" r="14.8" fill="#151515"/><circle cx="16.5" cy="16.5" r="13.3" fill="url(#rg538)"/><circle cx="16.5" cy="16.5" r="10.8" fill="#050505"/><circle cx="16.5" cy="16.5" r="10" fill="url(#lg538)"/><ellipse cx="13" cy="13" rx="2.4" ry="1.2" fill="#fff" opacity=".75" transform="rotate(-35 13 13)"/><circle cx="16.5" cy="16.5" r="12" fill="none" stroke="#fff" stroke-width="1.8" stroke-dasharray="1.4 1.4" pathLength="60" stroke-dashoffset="0" transform="rotate(0 16.5 16.5)" style="stroke-dasharray:1.2 1.3 1.2 1.3 1.2 1.3 1.2 1.3 1.2 1.3 1.2 1.3 1.2 1.3 0 100"/></svg>
  <div class="t1">SvrField.exe has stopped working</div>
  <div class="t2">Windows can check online for a solution to the problem.</div>
  <svg class="a" style="left:62px;top:104px" width="14" height="12"><path d="M1 6H9M6 2L10 6L6 10" fill="none" stroke="#1ea83a" stroke-width="2.6" stroke-linecap="round"/></svg>
  <div class="o1">Check online for a solution and close the program</div>
  <div class="box"></div>
  <svg class="a" style="left:62px;top:133px" width="14" height="12"><path d="M1 6H9M6 2L10 6L6 10" fill="none" stroke="#1ea83a" stroke-width="2.6" stroke-linecap="round"/></svg>
  <div class="o2">Close the program</div>
  <div class="btn" style="left:14px;top:174px;width:18px;height:20px"><div class="arr dn" style="left:5px;top:8px;border-left-width:4px;border-right-width:4px;border-top-width:5px"></div></div>
  <div class="vp">View problem details</div>
</div>
<div class="dlg" style="left:812px;top:288px">
  <div class="tb in" style="left:3px;top:3px;width:460px;height:17px;line-height:17px;padding-left:21px;color:#dedcd8;font-size:11.5px">Microsoft Windows</div>
  <svg class="a" style="left:4px;top:3px" width="18" height="18"><rect x="1" y="1" width="5" height="10" fill="#1a1a78"/><rect x="6" y="1" width="8" height="9" fill="#e0eef4"/><path d="M5 9L7 6" stroke="#222" stroke-width="1"/><path d="M3 12Q6 10 8 13Q11 9 16 7V13Q12 16 9 17Q5 16 3 12Z" fill="#78b880"/><path d="M4 12L8 15L15 8" fill="none" stroke="#3a8a48" stroke-width="1.6"/></svg>
  <div class="tbtn" style="left:446px;top:5px;width:16px;height:14px"><svg class="a" style="left:4px;top:3px" width="8" height="7"><path d="M0.5 0.5L7.5 6.5M7.5 0.5L0.5 6.5" stroke="#000" stroke-width="1.6"/></svg></div>
  <svg class="a" style="left:12px;top:31px" width="32" height="32"><defs><linearGradient id="rg812" x1="0" y1="0" x2="1" y2="1"><stop offset="0" stop-color="#f0f0f0"/><stop offset=".5" stop-color="#a8a8a8"/><stop offset="1" stop-color="#404040"/></linearGradient><radialGradient id="lg812" cx="70%" cy="75%" r="75%"><stop offset="0" stop-color="#8a5040"/><stop offset=".25" stop-color="#3a2c44"/><stop offset=".7" stop-color="#1c2030"/><stop offset="1" stop-color="#0a0a10"/></radialGradient></defs><circle cx="16.5" cy="16.5" r="14.8" fill="#151515"/><circle cx="16.5" cy="16.5" r="13.3" fill="url(#rg812)"/><circle cx="16.5" cy="16.5" r="10.8" fill="#050505"/><circle cx="16.5" cy="16.5" r="10" fill="url(#lg812)"/><ellipse cx="13" cy="13" rx="2.4" ry="1.2" fill="#fff" opacity=".75" transform="rotate(-35 13 13)"/><circle cx="16.5" cy="16.5" r="12" fill="none" stroke="#fff" stroke-width="1.8" stroke-dasharray="1.4 1.4" pathLength="60" stroke-dashoffset="0" transform="rotate(0 16.5 16.5)" style="stroke-dasharray:1.2 1.3 1.2 1.3 1.2 1.3 1.2 1.3 1.2 1.3 1.2 1.3 1.2 1.3 0 100"/></svg>
  <div class="t1">SvrAgent.exe has stopped working</div>
  <div class="t2">Windows can check online for a solution to the problem.</div>
  <svg class="a" style="left:62px;top:104px" width="14" height="12"><path d="M1 6H9M6 2L10 6L6 10" fill="none" stroke="#1ea83a" stroke-width="2.6" stroke-linecap="round"/></svg>
  <div class="o1">Check online for a solution and close the program</div>
  <div class="box"></div>
  <svg class="a" style="left:62px;top:133px" width="14" height="12"><path d="M1 6H9M6 2L10 6L6 10" fill="none" stroke="#1ea83a" stroke-width="2.6" stroke-linecap="round"/></svg>
  <div class="o2">Close the program</div>
  <div class="btn" style="left:14px;top:174px;width:18px;height:20px"><div class="arr dn" style="left:5px;top:8px;border-left-width:4px;border-right-width:4px;border-top-width:5px"></div></div>
  <div class="vp">View problem details</div>
</div>

<!-- ============ BALLOON ============ -->
<div class="a" style="left:1077px;top:727px;width:190px;height:42px;background:#b8b6a4;border-radius:9px;box-shadow:0 0 0 1px #a8a694"></div>
<svg class="a" style="left:1086px;top:735px" width="17" height="17"><circle cx="8.5" cy="8.5" r="8" fill="#2a4a9a" stroke="#a0a8c8"/><circle cx="8.5" cy="8.5" r="6.5" fill="#3a5ab0"/><rect x="7.3" y="7" width="2.4" height="6" fill="#fff"/><circle cx="8.5" cy="4.8" r="1.3" fill="#fff"/></svg>
<div class="a" style="left:1108px;top:733px;font-weight:bold;font-size:12px;line-height:15px;color:#1a1a1a">Acer eNet Management</div>
<div class="a" style="left:1108px;top:749px;font-size:11px;line-height:14px;color:#1a1a1a">Internet Connected</div>
<div class="a" style="left:1249px;top:731px;width:14px;height:14px;border:1px solid #707068;background:#b0ae9c"><svg class="a" style="left:2px;top:2px" width="9" height="9"><path d="M1 1L8 8M8 1L1 8" stroke="#111" stroke-width="2.2"/></svg></div>

</body></html>
